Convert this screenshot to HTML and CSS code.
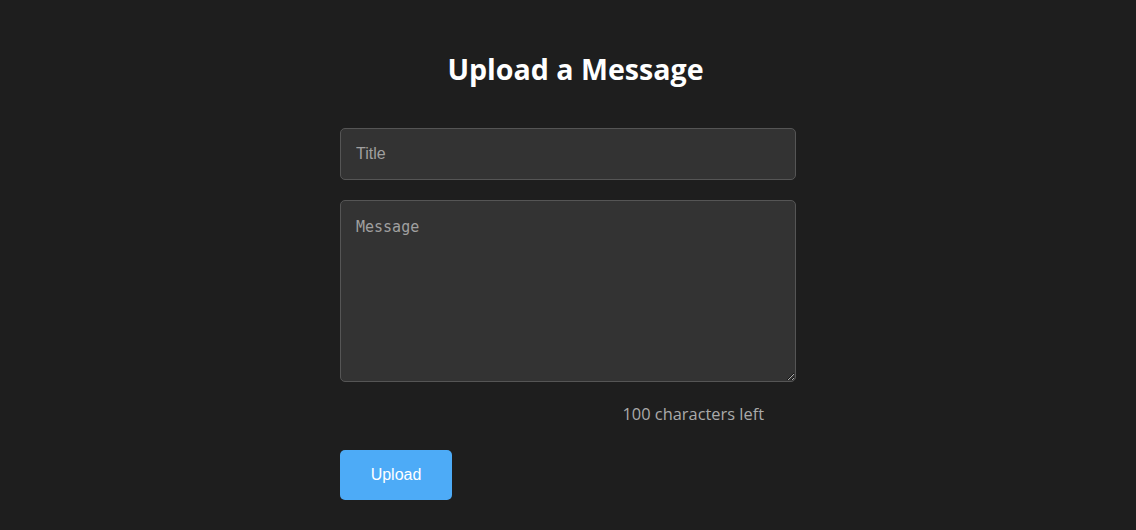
FILE: index.html
```html
<!DOCTYPE html>
<html>
<head>
<meta charset="utf-8">
<link rel="stylesheet" href="styles.css">
</head>
<body>
<main class="page">
  <h1 class="heading">Upload a Message</h1>
  <form class="form">
    <input class="field" type="text" placeholder="Title">
    <textarea class="area" placeholder="Message"></textarea>
    <div class="counter">100 characters left</div>
    <button class="btn" type="button">Upload</button>
  </form>
</main>
</body>
</html>
```
FILE: styles.css
```css
html, body {
  margin: 0;
  background: #1e1e1e;
}
.page {
  width: 456px;
  margin: 0 auto;
  padding-top: 50px;
  display: flex;
  flex-direction: column;
}
.heading {
  margin: 0 0 40px;
  padding-left: 15px;
  font-family: "Open Sans", sans-serif;
  font-weight: 700;
  font-size: 28.6px;
  line-height: 38px;
  color: #ffffff;
  text-align: center;
}
.form {
  display: flex;
  flex-direction: column;
}
.field {
  box-sizing: border-box;
  height: 52px;
  padding: 0 15px;
  border: 1px solid #555;
  border-radius: 5px;
  background: #333;
  color: #ddd;
  font-family: "Liberation Sans", Arial, sans-serif;
  font-size: 16px;
  outline: none;
}
.field::placeholder { color: #a0a0a0; }
.area {
  box-sizing: border-box;
  margin-top: 20px;
  height: 182px;
  padding: 17px 15px 15px;
  border: 1px solid #555;
  border-radius: 5px;
  background: #333;
  color: #ddd;
  font-family: "DejaVu Sans Mono", monospace;
  font-size: 15px;
  outline: none;
  resize: vertical;
}
.area::placeholder { color: #a0a0a0; }
.counter {
  margin-top: 21px;
  padding-right: 32px;
  text-align: right;
  font-family: "Open Sans", sans-serif;
  font-size: 16.4px;
  line-height: 22px;
  color: #aaaaaa;
}
.btn {
  margin-top: 25px;
  align-self: flex-start;
  width: 112px;
  height: 50px;
  border: none;
  border-radius: 5px;
  background: #4dabf7;
  color: #fff;
  font-family: "Liberation Sans", Arial, sans-serif;
  font-size: 16px;
}
```
